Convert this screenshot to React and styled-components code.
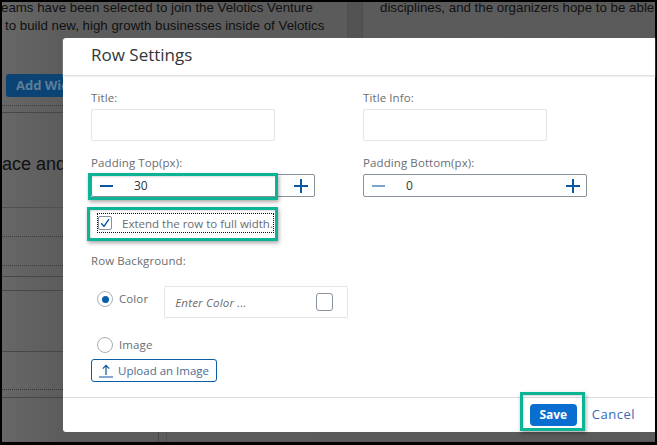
import React from 'react'
import styled, { createGlobalStyle } from 'styled-components'

const UI_FONT = '"Open Sans", "Noto Sans", sans-serif'
const BLUE = '#0a5ea8'
const TEAL = '#0db395'

const GlobalStyle = createGlobalStyle`
  html, body {
    margin: 0;
    padding: 0;
    background: #000;
  }
`

const Frame = styled.div`
  position: relative;
  box-sizing: border-box;
  width: 657px;
  height: 445px;
  padding: 2px 2px 3px 2px;
  background: #000;
  overflow: hidden;
  font-family: ${UI_FONT};
`

const Backdrop = styled.div`
  height: 100%;
  background: linear-gradient(90deg, #676767 0, #5c5c5c 60px, #5a5a5a 100%);
  overflow: hidden;
  font-family: "Liberation Sans", Arial, sans-serif;
  color: #101010;
`

const TopPanels = styled.div`
  display: grid;
  grid-template-columns: 345px 16px 1fr;
  height: 65px;
`

const PanelText = styled.div`
  font-size: 13.3px;
  line-height: 18px;
  white-space: nowrap;
  margin-top: -3px;
  padding-left: ${(props) => props.$indent || 0}px;
`

const Line = styled.div`
  margin-left: ${(props) => props.$shift || 0}px;
`

const Gutter = styled.div`
  background: #535353;
  border-left: 1px solid #4c4c4c;
  border-right: 1px solid #4c4c4c;
`

const AddWidget = styled.div`
  width: 90px;
  height: 23px;
  margin: 7px 0 0 4px;
  border-radius: 3px;
  background: #0b4474;
  color: #5d7d99;
  font: 700 13px/23px ${UI_FONT};
  text-indent: 10px;
`

const Rule = styled.div`
  width: 61px;
  margin-top: ${(props) => props.$top}px;
  border-top: 1px ${(props) => props.$kind || 'solid'} ${(props) => props.$color || '#474747'};
`

const BackHeading = styled.div`
  margin: 40px 0 0 0;
  font-size: 18px;
  line-height: 22px;
  white-space: nowrap;
  width: 61px;
  overflow: hidden;
`

const BottomSeam = styled.div`
  width: 7px;
  height: 30px;
  margin: 28px 0 0 156px;
  border-left: 1px solid #474747;
  border-right: 1px dotted #474747;
`

const Modal = styled.div`
  position: absolute;
  left: 63px;
  top: 38px;
  width: 592px;
  height: 394px;
  display: flex;
  flex-direction: column;
  background: #fff;
  border-radius: 3px 0 0 3px;
  color: #6a6d70;
`

const ModalHeader = styled.div`
  flex: none;
  box-sizing: border-box;
  height: 38px;
  padding: 5px 0 0 28px;
  border-bottom: 1px solid #e2e2e2;
  box-shadow: 0 1px 1px #f0f0f0;
  color: #32363a;
  font-size: 17px;
  line-height: 24px;
`

const ModalBody = styled.div`
  flex: 1;
  padding: 14px 0 0 28px;
`

const FieldGrid = styled.div`
  display: grid;
  grid-template-columns: 272px 272px;
`

const Label = styled.div`
  font-size: 11.5px;
  line-height: 16px;
  height: 16px;
  letter-spacing: 0.1px;
`

const TextBox = styled.div`
  box-sizing: border-box;
  width: 184px;
  height: 32px;
  margin: 3px 0 14px;
  border: 1px solid #e5e5e5;
  border-radius: 2px;
  background: #fff;
`

const Stepper = styled.div`
  box-sizing: border-box;
  display: flex;
  align-items: center;
  width: 224px;
  height: 23px;
  margin-top: 3px;
  padding: 0 6px 0 8px;
  border: 1px solid #89919a;
  border-radius: 2px;
  font-size: 12px;
  color: #32363a;
`

const StepValue = styled.span`
  flex: 1;
  padding-left: ${(props) => props.$indent}px;
`

const CheckRow = styled.div`
  display: flex;
  align-items: center;
  gap: 10px;
  box-sizing: border-box;
  width: 177px;
  height: 20px;
  margin: 16px 0 0 6px;
  padding-left: 1px;
  outline: 1px dotted #111;
  outline-offset: -1px;
  font-size: 11.5px;
  white-space: nowrap;
`

const CheckBox = styled.span`
  box-sizing: border-box;
  flex: none;
  display: flex;
  width: 14px;
  height: 14px;
  border: 1px solid #89919a;
  border-radius: 2px;
`

const BackgroundLabel = styled(Label)`
  margin-top: 20px;
`

const ColorRow = styled.div`
  display: flex;
  align-items: flex-start;
  height: 32px;
  margin: 17px 0 0 6px;
`

const Radio = styled.span`
  box-sizing: border-box;
  flex: none;
  display: flex;
  align-items: center;
  justify-content: center;
  width: 16px;
  height: 16px;
  margin-top: ${(props) => props.$top || 0}px;
  border: 1px solid #a9afb6;
  border-radius: 50%;
  background: #fff;
`

const RadioDot = styled.span`
  width: 7px;
  height: 7px;
  border-radius: 50%;
  background: ${BLUE};
`

const RadioText = styled.span`
  margin-left: 6px;
  margin-top: ${(props) => props.$top || 0}px;
  font-size: 11.5px;
  line-height: 16px;
  letter-spacing: 0.1px;
`

const ColorInput = styled.div`
  box-sizing: border-box;
  display: flex;
  align-items: center;
  justify-content: space-between;
  width: 184px;
  height: 32px;
  margin-left: 16px;
  padding: 0 14px 0 10px;
  border: 1px solid #e5e5e5;
  border-radius: 2px;
  font-size: 11.5px;
  font-style: italic;
  letter-spacing: 0.2px;
`

const Swatch = styled.span`
  box-sizing: border-box;
  width: 17px;
  height: 18px;
  border: 1px solid #89919a;
  border-radius: 3px;
`

const ImageRow = styled.div`
  display: flex;
  align-items: center;
  height: 16px;
  margin: 19px 0 0 6px;
`

const UploadButton = styled.div`
  box-sizing: border-box;
  display: flex;
  align-items: center;
  gap: 5px;
  width: 126px;
  height: 23px;
  margin-top: 6px;
  padding-left: 7px;
  border: 1px solid ${BLUE};
  border-radius: 3px;
  color: #4b6d8d;
  font-size: 11.5px;
  white-space: nowrap;
`

const ModalFooter = styled.div`
  flex: none;
  box-sizing: border-box;
  display: flex;
  align-items: center;
  justify-content: flex-end;
  gap: 15px;
  height: 35px;
  padding: 0 20px 1px 0;
  border-top: 1px solid #dcdcdc;
`

const SaveButton = styled.div`
  width: 47px;
  height: 22px;
  border-radius: 4px;
  background: #0a6ed1;
  color: #fff;
  font-size: 12px;
  font-weight: 700;
  line-height: 22px;
  text-align: center;
`

const CancelLink = styled.div`
  margin-top: -2px;
  color: #3b68b5;
  font-size: 13px;
  letter-spacing: 0.5px;
`

const Highlight = styled.div`
  position: absolute;
  box-sizing: border-box;
  left: ${(props) => props.$x}px;
  top: ${(props) => props.$y}px;
  width: ${(props) => props.$w}px;
  height: ${(props) => props.$h}px;
  border: 3px solid ${TEAL};
  box-shadow: 1px 2px 4px rgba(0, 0, 0, 0.35), inset 1px 1px 2px rgba(0, 0, 0, 0.15);
`

function StepIcon({ plus, faded }) {
  return (
    <svg width="14" height="14" viewBox="0 0 14 14" fill="none">
      <path
        d={plus ? 'M0 7H14M7 0V14' : 'M0 7H13'}
        stroke={faded ? '#7ba4cc' : '#0a57a3'}
        strokeWidth="2"
      />
    </svg>
  )
}

function App() {
  return (
    <React.Fragment>
      <GlobalStyle />
      <Frame>
        <Backdrop>
          <TopPanels>
            <PanelText>
              <Line $shift={-1}>eams have been selected to join the Velotics Venture</Line>
              <Line $shift={3}>to build new, high growth businesses inside of Velotics</Line>
            </PanelText>
            <Gutter />
            <PanelText $indent={17}>disciplines, and the organizers hope to be able</PanelText>
          </TopPanels>
          <AddWidget>Add Widget</AddWidget>
          <Rule $top={8} $kind="dotted" $color="#3c3c3c" />
          <Rule $top={6} />
          <BackHeading>ace and</BackHeading>
          <Rule $top={32} $color="#505050" />
          <Rule $top={28} $kind="dotted" $color="#3c3c3c" />
          <Rule $top={28} $kind="dotted" $color="#3c3c3c" />
          <Rule $top={10} />
          <Rule $top={13} />
          <Rule $top={60} />
          <Rule $top={37} $kind="dotted" $color="#333" />
          <Rule $top={7} />
          <BottomSeam />
        </Backdrop>
        <Modal>
          <ModalHeader>Row Settings</ModalHeader>
          <ModalBody>
            <FieldGrid>
              <div>
                <Label>Title:</Label>
                <TextBox />
              </div>
              <div>
                <Label>Title Info:</Label>
                <TextBox />
              </div>
              <div>
                <Label>Padding Top(px):</Label>
                <Stepper>
                  <StepIcon />
                  <StepValue $indent={20}>30</StepValue>
                  <StepIcon plus />
                </Stepper>
              </div>
              <div>
                <Label>Padding Bottom(px):</Label>
                <Stepper>
                  <StepIcon faded />
                  <StepValue $indent={20}>0</StepValue>
                  <StepIcon plus />
                </Stepper>
              </div>
            </FieldGrid>
            <CheckRow>
              <CheckBox>
                <svg width="12" height="12" viewBox="0 0 12 12" fill="none">
                  <path d="M2.2 6.2L5 9.4L10 2.2" stroke="#0a57a3" strokeWidth="1.4" />
                </svg>
              </CheckBox>
              Extend the row to full width.
            </CheckRow>
            <BackgroundLabel>Row Background:</BackgroundLabel>
            <ColorRow>
              <Radio $top={5}>
                <RadioDot />
              </Radio>
              <RadioText $top={5}>Color</RadioText>
              <ColorInput>
                Enter Color ...
                <Swatch />
              </ColorInput>
            </ColorRow>
            <ImageRow>
              <Radio />
              <RadioText>Image</RadioText>
            </ImageRow>
            <UploadButton>
              <svg width="14" height="14" viewBox="0 0 14 14" fill="none">
                <path d="M7 11V1.5M3.8 4.6L7 1.4L10.2 4.6M0 13H14" stroke="#0a57a3" strokeWidth="1.2" />
              </svg>
              Upload an Image
            </UploadButton>
          </ModalBody>
          <ModalFooter>
            <SaveButton>Save</SaveButton>
            <CancelLink>Cancel</CancelLink>
          </ModalFooter>
        </Modal>
        <Highlight $x={88} $y={173} $w={190} $h={27} />
        <Highlight $x={87} $y={207} $w={191} $h={34} />
        <Highlight $x={520} $y={392} $w={65} $h={39} />
      </Frame>
    </React.Fragment>
  )
}

export default App
